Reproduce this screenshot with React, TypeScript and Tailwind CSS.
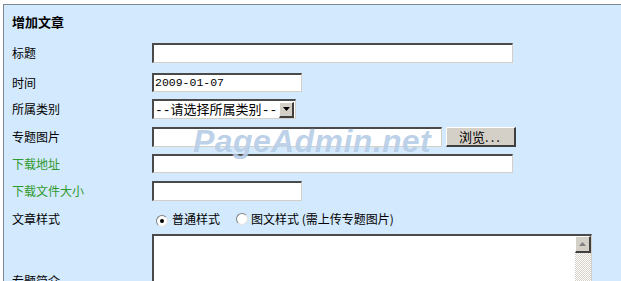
import React from "react"

const font = { fontFamily: '"Noto Sans CJK SC", "Noto Sans", sans-serif' }
const mono = { fontFamily: '"Liberation Mono", monospace' }

// 凹陷的输入框边框
const inset =
  "border-t-2 border-l-2 border-b border-r border-t-[#4a4a4a] border-l-[#4a4a4a] border-b-[#d4d0c8] border-r-[#d4d0c8] bg-white"

// 凸起的按钮边框
const raised =
  "border-t border-l border-b-2 border-r-2 border-t-white border-l-white border-b-[#404040] border-r-[#404040] bg-[#d4d0c8]"

const Row = ({
  label,
  green,
  className,
  children,
}: {
  label: string
  green?: boolean
  className?: string
  children: React.ReactNode
}) => (
  <div className={`flex items-center ${className ?? ""}`}>
    <div className={`w-[140px] shrink-0 text-[12px] leading-none ${green ? "text-[#2f9a2f]" : "text-black"}`}>
      {label}
    </div>
    {children}
  </div>
)

const Radio = ({ checked }: { checked?: boolean }) => (
  <span className="relative inline-flex h-[12px] w-[12px] items-center justify-center rounded-full border border-t-[#808080] border-l-[#808080] border-b-[#e0e0e0] border-r-[#e0e0e0] bg-white">
    {checked && <span className="h-[4px] w-[4px] rounded-full bg-black" />}
  </span>
)

export default function App() {
  return (
    <div className="min-h-screen bg-white pt-[4px] pl-[3px]" style={font}>
      <div className="relative h-[400px] border-t border-l border-[#7d8790] bg-[#d3e9fd] pl-[8px]">
        {/* 标题栏 */}
        <div className="flex h-[34px] items-center text-[13px] font-bold text-black">增加文章</div>

        <Row label="标题" className="mt-[4px] h-[20px]">
          <div className={`${inset} h-[20px] w-[361px]`} />
        </Row>

        <Row label="时间" className="mt-[10px] h-[19px]">
          <div className={`${inset} flex h-[19px] w-[150px] items-center pl-[1px] text-[11.5px] text-black`} style={mono}>
            2009-01-07
          </div>
        </Row>

        <Row label="所属类别" className="mt-[7px] h-[20px]">
          <div className={`${inset} flex h-[20px] w-[144px] items-center overflow-hidden`}>
            <span className="whitespace-nowrap pl-[1px] text-[13px] leading-none text-black">
              <span style={mono}>--</span>请选择所属类别<span style={mono}>--</span>
            </span>
            <span className={`${raised} ml-auto mr-[1px] flex h-[16px] w-[15px] shrink-0 items-center justify-center`}>
              <svg width="7" height="4" viewBox="0 0 7 4">
                <path d="M0 0h7L3.5 4z" fill="#000" />
              </svg>
            </span>
          </div>
        </Row>

        <Row label="专题图片" className="mt-[8px] h-[20px]">
          <div className={`${inset} h-[20px] w-[290px]`} />
          <div className={`${raised} ml-[4px] flex h-[20px] w-[70px] items-center justify-center text-[13px] text-black`}>
            浏览<span className="tracking-[2px]">...</span>
          </div>
        </Row>

        <Row label="下载地址" green className="mt-[7px] h-[19px]">
          <div className={`${inset} h-[19px] w-[361px]`} />
        </Row>

        <Row label="下载文件大小" green className="mt-[8px] h-[20px]">
          <div className={`${inset} h-[20px] w-[150px]`} />
        </Row>

        <Row label="文章样式" className="mt-[10px] h-[16px]">
          <div className="flex items-center text-[12px] leading-none text-black">
            <span className="ml-[4px]">
              <Radio checked />
            </span>
            <span className="ml-[4px]">普通样式</span>
            <span className="ml-[16px]">
              <Radio />
            </span>
            <span className="ml-[3px]">图文样式 (需上传专题图片)</span>
          </div>
        </Row>

        <Row label="专题简介" className="mt-[7px] h-[94px]">
          <div className={`${inset} flex h-[94px] w-[440px] justify-end`}>
            <div className="flex w-[16px] flex-col">
              <div className={`${raised} flex h-[17px] items-center justify-center`}>
                <svg width="7" height="4" viewBox="0 0 7 4">
                  <path d="M3.5 0L7 4H0z" fill="#808080" />
                </svg>
              </div>
              <div className="flex-1 [background-image:repeating-conic-gradient(#d4d0c8_0_25%,#ffffff_0_50%)] [background-size:2px_2px]" />
            </div>
          </div>
        </Row>

        {/* 水印 */}
        <div
          className="pointer-events-none absolute left-[189px] top-[120px] text-[32px] font-bold italic leading-none tracking-[0.4px] text-[rgba(80,135,195,0.4)] [text-shadow:0_0_1px_rgba(255,255,255,0.9)]"
          style={{ fontFamily: '"Liberation Sans", Arial, sans-serif' }}
        >
          PageAdmin.net
        </div>
      </div>
    </div>
  )
}
